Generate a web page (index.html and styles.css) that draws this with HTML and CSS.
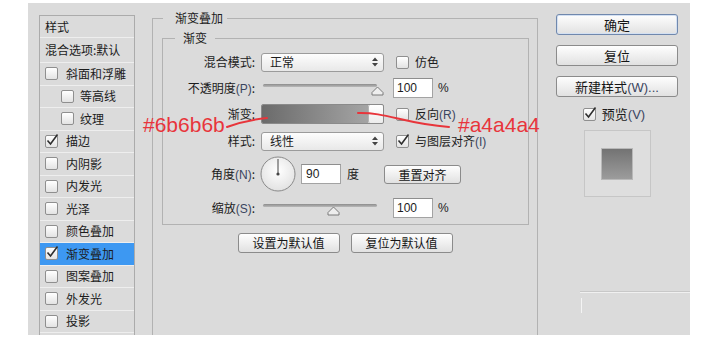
FILE: index.html
```html
<!DOCTYPE html>
<html lang="zh-CN">
<head>
    <meta charset="UTF-8">
    <title>图层样式 - 渐变叠加</title>
    <link rel="stylesheet" href="styles.css">
</head>
<body>

<div class="dialog">
    <ul class="style-list">
        <li class="head">样式</li>
        <li class="head blend">混合选项:默认</li>
        <li><span class="cb"></span>斜面和浮雕</li>
        <li class="sub"><span class="cb"></span>等高线</li>
        <li class="sub"><span class="cb"></span>纹理</li>
        <li><span class="cb on"><svg width="15" height="15" viewBox="0 0 15 15"><path d="M2.5 7.5 L5.5 11 L12.5 1.5"/></svg></span>描边</li>
        <li><span class="cb"></span>内阴影</li>
        <li><span class="cb"></span>内发光</li>
        <li><span class="cb"></span>光泽</li>
        <li><span class="cb"></span>颜色叠加</li>
        <li class="active"><span class="cb on"><svg width="15" height="15" viewBox="0 0 15 15"><path d="M2.5 7.5 L5.5 11 L12.5 1.5"/></svg></span>渐变叠加</li>
        <li><span class="cb"></span>图案叠加</li>
        <li><span class="cb"></span>外发光</li>
        <li><span class="cb"></span>投影</li>
        <li></li>
    </ul>

    <div class="main">
        <fieldset class="outer">
            <legend>渐变叠加</legend>
            <fieldset class="inner">
                <legend>渐变</legend>

                <div class="row r-mode">
                    <span class="lbl">混合模式:</span>
                    <div class="select"><span>正常</span><svg class="arrows" width="6" height="10" viewBox="0 0 6 10"><path d="M0 4 L3 0.5 L6 4 Z M0 6 L3 9.5 L6 6 Z"/></svg></div>
                    <span class="cb ml"></span><span class="cb-text">仿色</span>
                </div>

                <div class="row r-opacity">
                    <span class="lbl">不透明度<span class="key">(P)</span>:</span>
                    <div class="slider">
                        <span class="track"></span>
                        <svg class="thumb" style="left: 110px" width="13" height="10" viewBox="0 0 13 10"><path d="M1 9 L1 6.5 L6.5 1 L12 6.5 L12 9 Z"/></svg>
                    </div>
                    <span class="num">100</span><span class="unit">%</span>
                </div>

                <div class="row r-grad">
                    <span class="lbl">渐变:</span>
                    <div class="grad-pick"><span class="grad"></span><span class="grad-drop"></span></div>
                    <span class="cb ml"></span><span class="cb-text">反向<span class="key">(R)</span></span>
                </div>

                <div class="row r-style">
                    <span class="lbl">样式:</span>
                    <div class="select"><span>线性</span><svg class="arrows" width="6" height="10" viewBox="0 0 6 10"><path d="M0 4 L3 0.5 L6 4 Z M0 6 L3 9.5 L6 6 Z"/></svg></div>
                    <span class="cb ml on"><svg width="15" height="15" viewBox="0 0 15 15"><path d="M2.5 7.5 L5.5 11 L12.5 1.5"/></svg></span><span class="cb-text">与图层对齐<span class="key">(I)</span></span>
                </div>

                <div class="row r-angle">
                    <span class="lbl">角度<span class="key">(N)</span>:</span>
                    <svg class="dial" width="36" height="36" viewBox="0 0 36 36">
                        <defs>
                            <radialGradient id="dialbg" cx="50%" cy="40%" r="60%">
                                <stop offset="0" stop-color="#ffffff"/>
                                <stop offset="1" stop-color="#e2e2e2"/>
                            </radialGradient>
                        </defs>
                        <circle cx="18" cy="18" r="17" fill="url(#dialbg)" stroke="#8a8a8a"/>
                        <line x1="18" y1="18" x2="18" y2="3" stroke="#444" stroke-width="1"/>
                        <circle cx="18" cy="18" r="1.6" fill="#444"/>
                    </svg>
                    <span class="num angle">90</span>
                    <span class="deg">度</span>
                    <button class="btn reset">重置对齐</button>
                </div>

                <div class="row r-scale">
                    <span class="lbl">缩放<span class="key">(S)</span>:</span>
                    <div class="slider">
                        <span class="track"></span>
                        <svg class="thumb" style="left: 66px" width="13" height="10" viewBox="0 0 13 10"><path d="M1 9 L1 6.5 L6.5 1 L12 6.5 L12 9 Z"/></svg>
                    </div>
                    <span class="num">100</span><span class="unit">%</span>
                </div>
            </fieldset>

            <div class="defaults">
                <button class="btn">设置为默认值</button>
                <button class="btn">复位为默认值</button>
            </div>
        </fieldset>
    </div>

    <div class="side">
        <button class="btn primary">确定</button>
        <button class="btn">复位</button>
        <button class="btn">新建样式<span class="key">(W)...</span></button>
        <div class="preview-toggle">
            <span class="cb on"><svg width="15" height="15" viewBox="0 0 15 15"><path d="M2.5 7.5 L5.5 11 L12.5 1.5"/></svg></span>
            <span class="cb-text">预览<span class="key">(V)</span></span>
        </div>
        <div class="preview"><span class="swatch"></span></div>
        <div class="side-foot"></div>
    </div>
</div>

<!-- red notes drawn over the screenshot -->
<svg class="notes" width="720" height="346" viewBox="0 0 720 346">
    <path d="M227 127 Q 246 120 267 118" />
    <path d="M358 113 C 386 112, 405 124, 449 127" />
    <text x="143" y="132">#6b6b6b</text>
    <text x="458" y="132">#a4a4a4</text>
</svg>

</body>
</html>
```

FILE: styles.css
```css
* {
    box-sizing: border-box;
}
body {
    position: relative;
    margin: 0;
    background-color: #ffffff;
    font-family: "Noto Sans CJK SC", "Liberation Sans", sans-serif;
    font-size: 12px;
    line-height: 14px;
    color: #1c1c1c;
}
.dialog {
    display: flex;
    align-items: flex-start;
    height: 332px;
    margin: 3px 30px 0 28px;
    background-color: #dbdbdb;
    overflow: hidden;
}
.key {
    font-family: "Liberation Sans", sans-serif;
    color: #3a4560;
}

/* checkboxes */
.cb {
    flex: none;
    position: relative;
    width: 13px;
    height: 13px;
    border: 1px solid #8f8f8f;
    border-radius: 2px;
    background: linear-gradient(#ffffff, #e3e3e3);
}
.cb svg {
    position: absolute;
    left: -1px;
    top: -3px;
    overflow: visible;
}
.cb svg path {
    fill: none;
    stroke: #2e2e2e;
    stroke-width: 1.6;
}
.cb.ml {
    margin-left: 12px;
}
.cb-text {
    margin-left: 6px;
    white-space: nowrap;
}

/* left list */
.style-list {
    flex: none;
    list-style: none;
    width: 96px;
    height: 340px;
    margin: 12px 0 0 11px;
    padding: 0;
    border: 1px solid #ababab;
}
.style-list li {
    display: flex;
    align-items: center;
    height: 22.5px;
    padding-left: 5px;
    border-top: 1px solid #eeeeee;
    white-space: nowrap;
}
.style-list li:first-child {
    height: 21px;
    border-top: none;
}
.style-list li.blend {
    height: 25px;
}
.style-list li .cb {
    margin-right: 8px;
}
.style-list li.sub {
    padding-left: 21px;
}
.style-list li.sub .cb {
    margin-right: 6px;
}
.style-list li.active {
    background-color: #3d98f2;
}

/* middle */
.main {
    flex: none;
    width: 386px;
    margin-left: 17px;
}
fieldset {
    min-width: 0;
    margin: 0;
    padding: 0;
    border: 1px solid #b2b2b2;
}
legend {
    font-size: 12px;
    line-height: 14px;
}
.outer {
    height: 400px;
    margin-top: 8px;
}
.outer > legend {
    margin-left: 10px;
    padding: 0 4px 0 12px;
}
.inner {
    margin: 6px 8px 0 9px;
    padding: 7px 0 6px;
}
.inner > legend {
    margin-left: 12px;
    padding: 0 8px;
}
.row {
    display: flex;
    align-items: center;
    height: 20px;
}
.lbl {
    flex: none;
    width: 92px;
    margin-right: 6px;
    text-align: right;
    white-space: nowrap;
}
.r-opacity { margin-top: 6px; }
.r-grad { margin-top: 6px; }
.r-style { margin-top: 7px; }
.r-angle { margin-top: 5px; height: 36px; }
.r-scale { margin-top: 6px; }

.select {
    flex: none;
    display: flex;
    align-items: center;
    justify-content: space-between;
    width: 123px;
    height: 19px;
    padding: 0 5px 0 8px;
    border: 1px solid #9b9b9b;
    border-radius: 3px;
    background: linear-gradient(#fdfdfd, #e8e8e8);
}
.arrows path {
    fill: #444444;
}

.slider {
    flex: none;
    position: relative;
    width: 123px;
    height: 20px;
}
.track {
    position: absolute;
    left: 2px;
    top: 6px;
    width: 114px;
    height: 3px;
    border-radius: 2px;
    background: linear-gradient(#8c8c8c, #b9b9b9);
}
.thumb {
    position: absolute;
    top: 8px;
}
.thumb path {
    fill: #eeeeee;
    stroke: #7a7a7a;
    stroke-linejoin: round;
}

.num {
    flex: none;
    width: 40px;
    height: 20px;
    margin-left: 9px;
    padding-left: 3px;
    border: 1px solid #a3a3a3;
    border-top-color: #8e8e8e;
    background-color: #ffffff;
    font-family: "Liberation Sans", sans-serif;
    line-height: 18px;
}
.unit {
    margin-left: 5px;
    font-family: "Liberation Sans", sans-serif;
}

.grad-pick {
    flex: none;
    display: flex;
    width: 123px;
    height: 20px;
    border: 1px solid #8a8a8a;
    border-radius: 2px;
    overflow: hidden;
}
.grad {
    flex: 1;
    background: linear-gradient(to right, #6b6b6b, #a4a4a4);
}
.grad-drop {
    width: 15px;
    border-left: 1px solid #b5b5b5;
    border-radius: 2px;
    background: linear-gradient(#ffffff, #ececec);
}

.dial {
    flex: none;
    margin-left: -1px;
}
.num.angle {
    margin-left: 5px;
    padding-left: 4px;
}
.deg {
    margin-left: 6px;
}

.btn {
    height: 20px;
    padding: 0;
    border: 1px solid #8b8b8b;
    border-radius: 3px;
    background: linear-gradient(#fefefe, #e1e1e1);
    font-family: "Noto Sans CJK SC", "Liberation Sans", sans-serif;
    font-size: 12px;
    line-height: 18px;
    color: #151515;
}
.btn.reset {
    width: 77px;
    height: 19px;
    margin-left: 25px;
}
.defaults {
    display: flex;
    justify-content: center;
    gap: 11px;
    margin-top: 8px;
}
.defaults .btn {
    width: 102px;
}

/* right column */
.side {
    flex: none;
    display: flex;
    flex-direction: column;
    align-items: center;
    width: 122px;
    margin-left: 18px;
    padding-top: 11px;
}
.side .btn {
    width: 122px;
    height: 21px;
    margin-bottom: 10px;
    font-size: 13px;
    line-height: 19px;
}
.side .btn.primary {
    border-color: #7088ad;
    box-shadow: inset 0 0 0 1px #d3e0f2;
}
.preview-toggle {
    display: flex;
    align-items: center;
    height: 14px;
    margin-left: -6px;
    font-size: 13px;
}
.preview {
    display: flex;
    align-items: center;
    justify-content: center;
    width: 67px;
    height: 67px;
    margin-top: 9px;
    border: 1px solid #c6c6c6;
    background-color: #dedede;
}
.swatch {
    width: 32px;
    height: 32px;
    border: 1px solid #b8b8b8;
    background: linear-gradient(#737373, #9c9c9c);
}
.side-foot {
    align-self: flex-start;
    position: relative;
    width: 112px;
    height: 20px;
    margin: 94px 0 0 24px;
    border-top: 1px solid #c8c8c8;
    box-shadow: inset 0 1px 0 #f0f0f0;
}
.side-foot::after {
    content: "";
    position: absolute;
    left: 1px;
    top: 6px;
    width: 1px;
    height: 15px;
    background-color: #f4f4f4;
}

/* annotations */
.notes {
    position: absolute;
    left: 0;
    top: 0;
    pointer-events: none;
}
.notes path {
    fill: none;
    stroke: #e8353b;
    stroke-width: 2;
    stroke-linecap: round;
}
.notes text {
    font-family: "Liberation Sans", sans-serif;
    font-size: 21px;
    fill: #e8353b;
}
```
